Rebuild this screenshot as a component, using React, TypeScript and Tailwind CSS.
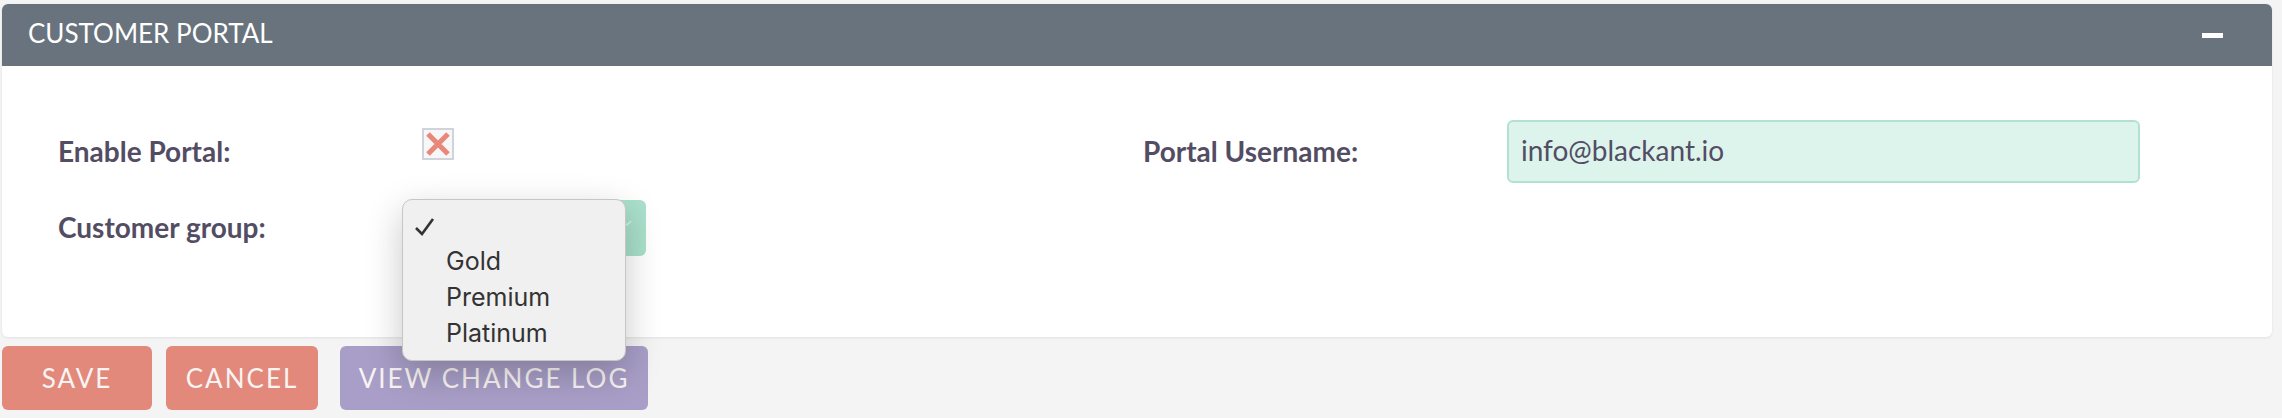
import React from "react";

function CrossBox() {
  return (
    <div className="flex h-[32px] w-[32px] items-center justify-center border-2 border-[#cfd4dc] bg-[#f7f7f8]">
      <svg width="26" height="26" viewBox="0 0 26 26" className="blur-[0.6px]">
        <path d="M3 3 L23 23 M23 3 L3 23" stroke="#e8877a" strokeWidth="5" strokeLinecap="butt" />
      </svg>
    </div>
  );
}

function GroupSelect() {
  const options = ["", "Gold", "Premium", "Platinum"];
  return (
    <div className="relative h-[56px] w-[224px] rounded-[6px] bg-[#a9e0cc]">
      <svg width="10" height="6" viewBox="0 0 10 6" className="absolute right-[14px] top-[20px]">
        <path d="M1 1 L5 5 L9 1" stroke="#d8f1e8" strokeWidth="1.5" fill="none" />
      </svg>
      <div className="absolute left-[-20px] top-[-1px] z-10 w-[224px] rounded-[10px] border border-[#c6c6c6] bg-[#f0f0f0] py-[8px] shadow-[0_12px_36px_rgba(0,0,0,0.22)] font-['Inter',sans-serif] text-[25px] text-[#333]">
        {options.map((o, i) => (
          <div key={i} className="relative flex h-[36px] items-center pl-[43px]">
            {i === 0 && (
              <svg width="22" height="20" viewBox="0 0 22 20" className="absolute left-[11px] top-[9px]">
                <path d="M2 11 L8 17 L19 2" stroke="#333" strokeWidth="2.6" fill="none" />
              </svg>
            )}
            {o}
          </div>
        ))}
      </div>
    </div>
  );
}

export default function App() {
  const label = "text-[28px] font-bold leading-[1.2] text-[#534d64]";
  const btn = "h-[64px] rounded-[6px] text-[26px] uppercase tracking-[2px] text-[#f8f4f3]";
  return (
    <div className="min-h-[418px] bg-[#f4f4f4] pl-[2px] pr-[10px] pt-[4px] font-['Lato',sans-serif]">
      <div className="rounded-[6px] bg-white shadow-[0_1px_3px_rgba(0,0,0,0.08)]">
        <div className="flex h-[62px] items-center justify-between rounded-t-[6px] bg-[#68737d] pb-[4px] pl-[26px] pr-[49px]">
          <span className="text-[26px] leading-none text-white">CUSTOMER PORTAL</span>
          <span className="mt-[4px] h-[5px] w-[21px] bg-white" />
        </div>
        <div className="grid grid-cols-[364px_721px_364px_633px] grid-rows-[63px_56px] items-center gap-y-[17px] pb-[81px] pl-[56px] pt-[54px]">
          <div className={label}>Enable Portal:</div>
          <div className="self-start pt-[8px]">
            <CrossBox />
          </div>
          <div className={label}>Portal Username:</div>
          <div className="flex h-[63px] items-center rounded-[6px] border-2 border-[#b1e2d1] bg-[#ddf4ed] pb-[4px] pl-[12px] text-[28px] text-[#534d64]">
            info@blackant.io
          </div>
          <div className={label}>Customer group:</div>
          <div>
            <GroupSelect />
          </div>
          <div />
          <div />
        </div>
      </div>
      <div className="mt-[9px] flex">
        <button className={`${btn} w-[150px] bg-[#e2897b]`}>Save</button>
        <button className={`${btn} ml-[14px] w-[152px] bg-[#e2897b]`}>Cancel</button>
        <button className={`${btn} ml-[22px] w-[308px] bg-[#a89ec7]`}>View Change Log</button>
      </div>
    </div>
  );
}
